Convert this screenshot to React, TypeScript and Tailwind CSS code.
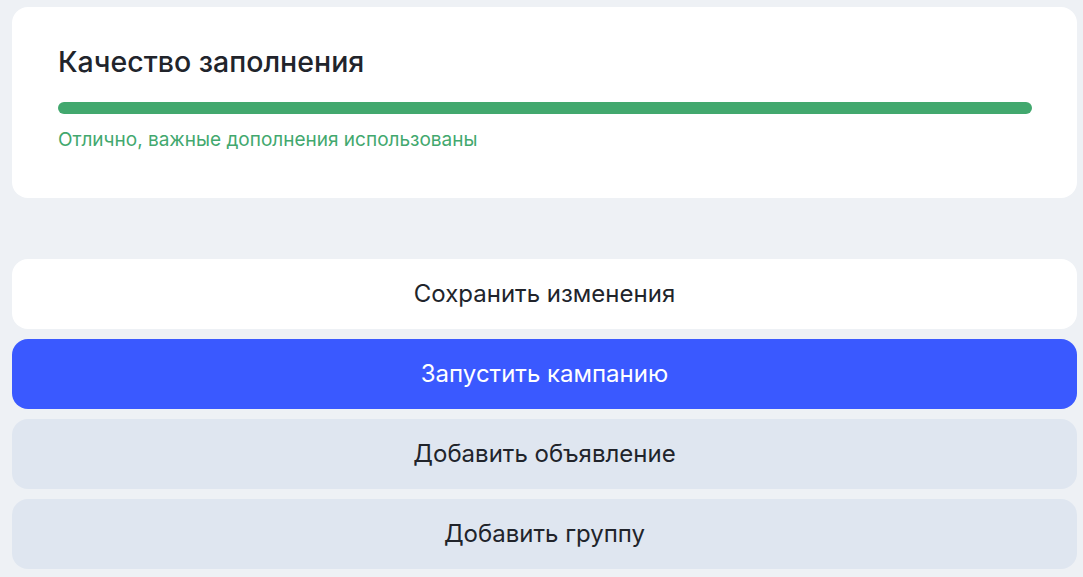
import React from 'react';

const buttons = [
  { label: 'Сохранить изменения', cls: 'bg-white text-[#21242b]' },
  { label: 'Запустить кампанию', cls: 'bg-[#3a59ff] text-white' },
  { label: 'Добавить объявление', cls: 'bg-[#dfe6f0] text-[#21242b]' },
  { label: 'Добавить группу', cls: 'bg-[#dfe6f0] text-[#21242b]' },
];

const App = () => {
  return (
    <div
      className="min-h-[577px] bg-[#eef1f5] pt-[7px] pl-[12px] pr-[6px]"
      style={{ fontFamily: 'Inter, "Noto Sans", sans-serif' }}
    >
      {/* Quality card */}
      <div className="h-[191px] rounded-[16px] bg-white pl-[46px] pr-[45px] pt-[38px]">
        <h2 className="text-[28.5px] font-medium leading-[34px] text-[#21242b]">Качество заполнения</h2>
        <div className="mt-[23px] h-[12px] rounded-full bg-[#42a86e]" />
        <p className="mt-[14px] text-[19px] leading-[24px] text-[#42a86e]">
          Отлично, важные дополнения использованы
        </p>
      </div>

      {/* Actions */}
      <div className="mt-[61px] flex flex-col gap-[10px]">
        {buttons.map((b) => (
          <button
            key={b.label}
            className={`flex h-[70px] w-full items-center justify-center rounded-[16px] text-[24px] ${b.cls}`}
          >
            {b.label}
          </button>
        ))}
      </div>
    </div>
  );
};

export default App;
